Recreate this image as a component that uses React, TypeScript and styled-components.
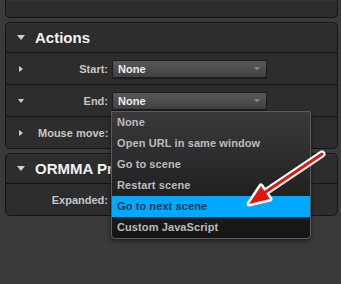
import React from "react";
import styled, { createGlobalStyle } from "styled-components";

const GlobalStyle = createGlobalStyle`
  html, body {
    margin: 0;
    padding: 0;
    background: #3a3a3a;
  }
  body {
    font-family: "Liberation Sans", Arial, sans-serif;
  }
`;

const Page = styled.div`
  position: relative;
  width: 341px;
  height: 284px;
  overflow: hidden;
  box-sizing: border-box;
  padding: 0 3px 0 5px;
  display: flex;
  flex-direction: column;
  gap: 4px;
`;

const Panel = styled.section<{ $cut?: boolean }>`
  flex: none;
  background: #2d2d2d;
  border: 1px solid #141414;
  border-radius: 5px;
  box-shadow: inset 0 1px 0 rgba(255, 255, 255, 0.04);
  ${({ $cut }) =>
    $cut &&
    `
    border-top: none;
    border-radius: 0 0 5px 5px;
    height: 17px;
  `}
`;

const Header = styled.div`
  height: 29px;
  border-bottom: 1px solid #141414;
  display: flex;
  align-items: center;
  gap: 10px;
  padding-left: 11px;
  color: #f2f2f2;
  font-size: 15px;
  font-weight: bold;
`;

const Row = styled.div<{ $last?: boolean }>`
  height: 31px;
  display: grid;
  grid-template-columns: 28px 70px 155px;
  column-gap: 4px;
  align-items: center;
  border-bottom: ${({ $last }) => ($last ? "none" : "1px solid #141414")};
`;

const Triangle = styled.span<{ $dir: "right" | "down"; $big?: boolean }>`
  display: block;
  width: 0;
  height: 0;
  ${({ $dir, $big }) =>
    $dir === "down"
      ? `
    border-left: ${$big ? 4.5 : 3}px solid transparent;
    border-right: ${$big ? 4.5 : 3}px solid transparent;
    border-top: ${$big ? 5 : 4}px solid #d0d0d0;
  `
      : `
    border-top: 3px solid transparent;
    border-bottom: 3px solid transparent;
    border-left: 4px solid #d0d0d0;
  `}
`;

const Toggle = styled.div<{ $offset: number }>`
  padding-left: ${({ $offset }) => $offset}px;
`;

const Label = styled.div`
  text-align: right;
  white-space: nowrap;
  color: #c6c6c6;
  font-size: 11px;
  font-weight: bold;
`;

const SelectWrap = styled.div`
  position: relative;
`;

const Select = styled.div`
  height: 16px;
  box-sizing: content-box;
  border: 1px solid #1c1c1c;
  border-radius: 2px;
  background: linear-gradient(#5a5a5a, #404040);
  box-shadow: 0 1px 1px rgba(0, 0, 0, 0.4);
  display: flex;
  align-items: center;
  justify-content: space-between;
  padding: 0 6px 0 5px;
  color: #f0f0f0;
  font-size: 11px;
  font-weight: bold;
`;

const Caret = styled.span`
  width: 0;
  height: 0;
  border-left: 3px solid transparent;
  border-right: 3px solid transparent;
  border-top: 3px solid #8a8a8a;
`;

const Menu = styled.ul`
  position: absolute;
  z-index: 10;
  top: calc(100% + 1px);
  left: -1px;
  width: 198px;
  margin: 0;
  padding: 0;
  list-style: none;
  border: 1px solid #5c5c5c;
  border-radius: 0 0 4px 4px;
  background: linear-gradient(#3a3a3a, #141414);
  box-shadow: 0 2px 4px rgba(0, 0, 0, 0.5);
  overflow: hidden;
`;

const Item = styled.li<{ $active?: boolean }>`
  height: 21px;
  display: flex;
  align-items: center;
  padding-left: 5px;
  font-size: 11px;
  font-weight: bold;
  letter-spacing: 0.1px;
  color: ${({ $active }) => ($active ? "#10395a" : "#bdbdbd")};
  background: ${({ $active }) => ($active ? "#00a8ff" : "transparent")};
`;

const Annotation = styled.svg`
  position: absolute;
  left: 0;
  top: 0;
  pointer-events: none;
  z-index: 20;
`;

const options = [
  "None",
  "Open URL in same window",
  "Go to scene",
  "Restart scene",
  "Go to next scene",
  "Custom JavaScript",
];

// selects that sit under the open menu show no value text
const Dropdown = ({ value = "", open }: { value?: string; open?: boolean }) => (
  <SelectWrap>
    <Select>
      <span>{value}</span>
      <Caret />
    </Select>
    {open && (
      <Menu>
        {options.map((o) => (
          <Item key={o} $active={o === "Go to next scene"}>
            {o}
          </Item>
        ))}
      </Menu>
    )}
  </SelectWrap>
);

export default function App() {
  return (
    <>
      <GlobalStyle />
      <Page>
        <Panel $cut />
        <Panel>
          <Header>
            <Triangle $dir="down" $big />
            Actions
          </Header>
          <Row>
            <Toggle $offset={13}>
              <Triangle $dir="right" />
            </Toggle>
            <Label>Start:</Label>
            <Dropdown value="None" />
          </Row>
          <Row>
            <Toggle $offset={12}>
              <Triangle $dir="down" />
            </Toggle>
            <Label>End:</Label>
            <Dropdown value="None" open />
          </Row>
          <Row $last>
            <Toggle $offset={13}>
              <Triangle $dir="right" />
            </Toggle>
            <Label>Mouse move:</Label>
            <Dropdown />
          </Row>
        </Panel>
        <Panel>
          <Header>
            <Triangle $dir="down" $big />
            ORMMA Pr
          </Header>
          <Row $last>
            <div />
            <Label>Expanded:</Label>
            <Dropdown />
          </Row>
        </Panel>
        <Annotation width="341" height="284" viewBox="0 0 341 284">
          <line x1="322" y1="154" x2="264" y2="193" stroke="#fff" strokeWidth="7" strokeLinecap="round" />
          <polygon points="249,204 261,186 270,199" fill="#fff" stroke="#fff" strokeWidth="5" strokeLinejoin="round" />
          <line x1="322" y1="154" x2="264" y2="193" stroke="#e5140e" strokeWidth="3" strokeLinecap="round" />
          <polygon points="249,204 261,186 270,199" fill="#e5140e" />
        </Annotation>
      </Page>
    </>
  );
}
